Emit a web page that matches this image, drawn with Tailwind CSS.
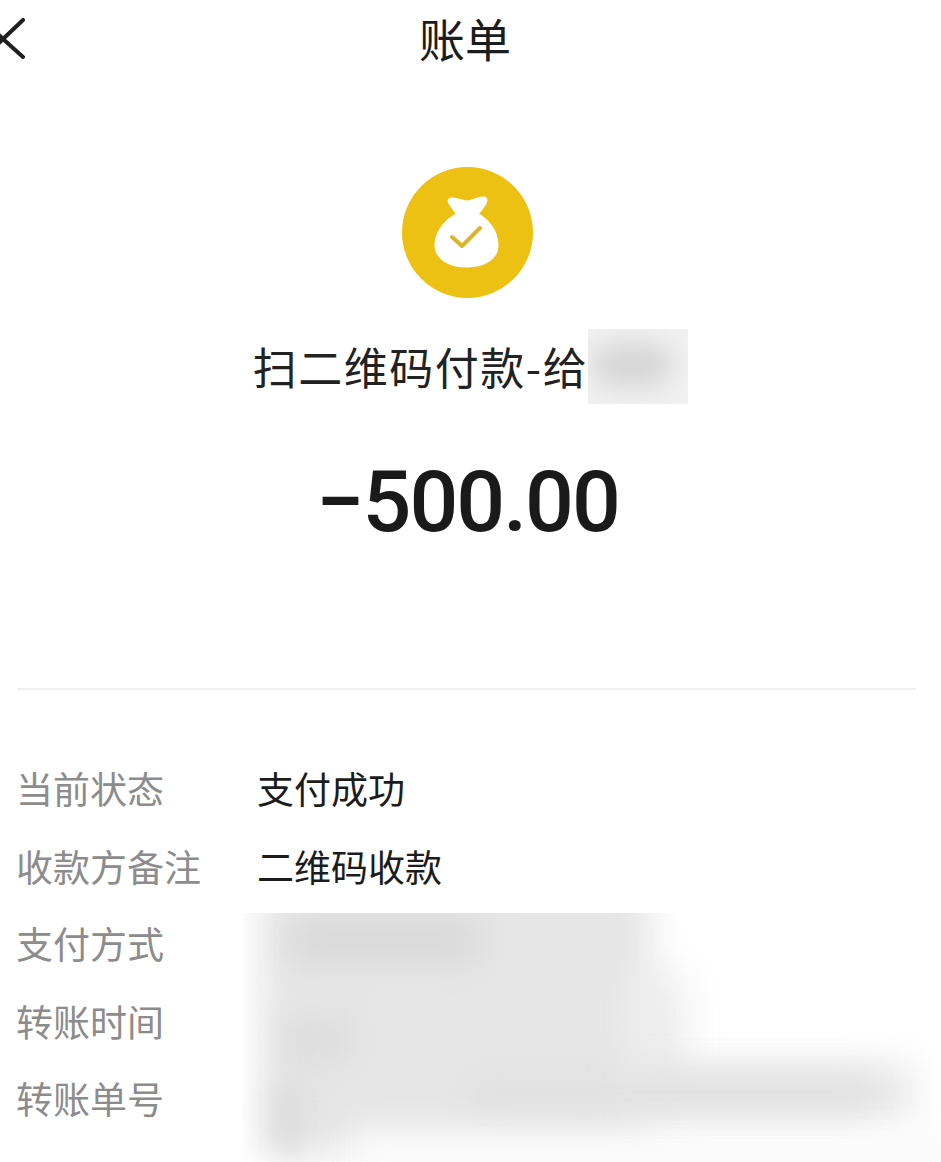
<!DOCTYPE html>
<html lang="zh-CN">
<head>
    <meta charset="UTF-8">
    <meta name="viewport" content="width=device-width, initial-scale=1.0">
    <title>账单</title>
    <script src="https://cdn.jsdelivr.net/npm/@tailwindcss/browser@4"></script>
</head>
<body class="bg-white">
    <div class="w-[941px] h-[1162px] overflow-hidden relative text-[#1c1c1c] font-['Noto_Sans_CJK_SC','Noto_Sans',sans-serif]">
        <!-- Header -->
        <header class="h-[80px] flex items-center justify-center relative pr-[11px] pb-[6px]">
            <svg class="absolute left-0 top-[18px] w-[28px] h-[42px]" viewBox="0 0 28 42" fill="none" stroke="#1f1f1f" stroke-width="4" stroke-linecap="round" stroke-linejoin="round">
                <path d="M23 2 L3 21 L23 39"/>
                <path d="M-4 14 L3 21 L-4 28"/>
            </svg>
            <h1 class="text-[46px] leading-[74px] font-normal">账单</h1>
        </header>

        <!-- Summary -->
        <section class="flex flex-col items-center pt-[87px] pr-[6px]">
            <div class="w-[131px] h-[131px] rounded-full bg-[#ecc113] flex items-center justify-center">
                <svg class="w-[131px] h-[131px]" viewBox="0 0 131 131">
                    <path fill="#fff" stroke="#fff" stroke-width="3" stroke-linejoin="round" d="M49 32 C54 31 60 35 65 35 C71 35 76 30 82 31 C85 32 84 35 82 38 C80 41 78 44 75 47 C86 53 95 65 95 78 C95 91 83 99 65 99 C47 99 34 91 34 78 C34 65 44 53 56 47 C53 44 51 41 49 38 C47 35 46 33 49 32 Z"/>
                    <path fill="none" stroke="#dcb528" stroke-width="4" stroke-linecap="round" stroke-linejoin="round" d="M50 70 L60 79 L78 61"/>
                </svg>
            </div>
            <div class="mt-[31px] h-[75px] flex items-center pl-[6px]">
                <span class="text-[44px] leading-[75px] tracking-[1.5px] text-[#222]">扫二维码付款-给</span>
                <div class="w-[100px] h-[75px] bg-[#f1f1f1] overflow-hidden">
                    <div class="w-[80px] h-[44px] mt-[14px] ml-[4px] rounded-full bg-[#d6d6d6] blur-[12px]"></div>
                </div>
            </div>
            <p class="mt-[46px] text-[86px] leading-[104px] font-medium font-['Roboto',sans-serif] tracking-[-2px] text-[#1a1a1a]">−500.00</p>
        </section>

        <!-- Divider -->
        <div class="mt-[134px] mx-[17px] w-[899px] h-[2px] bg-[#f0f0f0]"></div>

        <!-- Details -->
        <dl class="pt-[60px] pl-[16px] text-[37px] leading-[77.5px]">
            <div class="flex"><dt class="w-[241px] text-[#8c8c8c]">当前状态</dt><dd>支付成功</dd></div>
            <div class="flex"><dt class="w-[241px] text-[#8c8c8c]">收款方备注</dt><dd>二维码收款</dd></div>
            <div class="flex"><dt class="w-[241px] text-[#8c8c8c]">支付方式</dt><dd></dd></div>
            <div class="flex"><dt class="w-[241px] text-[#8c8c8c]">转账时间</dt><dd></dd></div>
            <div class="flex"><dt class="w-[241px] text-[#8c8c8c]">转账单号</dt><dd></dd></div>
        </dl>

        <!-- Blurred private details -->
        <div class="absolute left-[243px] top-[913px] w-[698px] h-[249px] overflow-hidden">
            <div class="absolute left-[18px] top-[-30px] w-[390px] h-[270px] bg-[#e6e6e6] blur-[18px]"></div>
            <div class="absolute left-[380px] top-[60px] w-[60px] h-[150px] bg-[#ececec] blur-[20px]"></div>
            <div class="absolute left-[390px] top-[150px] w-[280px] h-[60px] bg-[#e9e9e9] blur-[18px]"></div>
            <div class="absolute left-[45px] top-[5px] w-[190px] h-[45px] bg-[#d9d9d9] blur-[16px]"></div>
            <div class="absolute left-[40px] top-[105px] w-[70px] h-[45px] bg-[#dddddd] blur-[16px]"></div>
            <div class="absolute left-[110px] top-[215px] w-[600px] h-[60px] bg-[#fafafa] blur-[16px]"></div>
            <div class="absolute left-[230px] top-[165px] w-[400px] h-[30px] bg-[#e0e0e0] blur-[16px]"></div>
            <div class="absolute left-[30px] top-[170px] w-[30px] h-[70px] bg-[#dcdcdc] blur-[14px]"></div>
        </div>
    </div>
</body>
</html>
